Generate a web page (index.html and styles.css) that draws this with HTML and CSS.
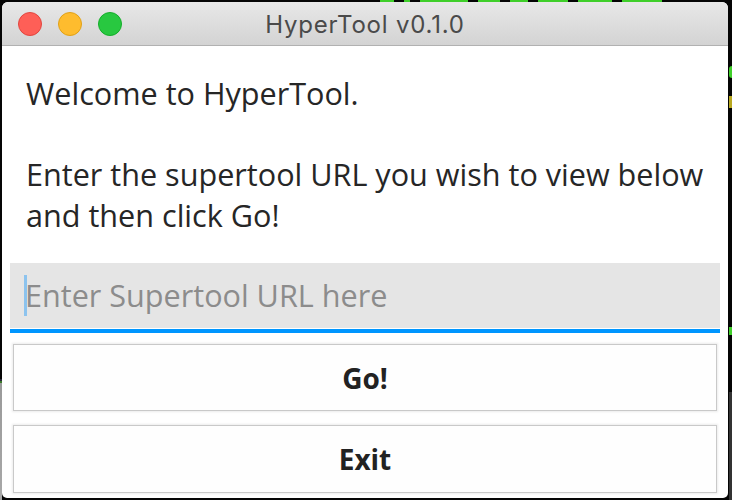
FILE: index.html
```html
<!DOCTYPE html>
<html>
<head>
<meta charset="utf-8">
<link rel="stylesheet" href="styles.css">
</head>
<body>
<div class="desktop">
  <div class="term term-top">
    <span class="tw" style="width:14px"></span><span class="tw" style="width:6px"></span><span class="tw" style="width:48px"></span><span class="tw" style="width:22px"></span><span class="tw" style="width:18px"></span><span class="tw" style="width:30px"></span><span class="tw" style="width:34px"></span><span class="tw" style="width:40px"></span>
  </div>
  <div class="term-side term-left"></div>
  <div class="term-side term-right"></div>
  <span class="mark m-e"></span>
  <span class="mark m-u"></span>
  <span class="mark m-dot"></span>

  <div class="window">
    <div class="titlebar">
      <div class="lights">
        <span class="light red"></span>
        <span class="light yellow"></span>
        <span class="light green"></span>
      </div>
      <div class="title">HyperTool v0.1.0</div>
    </div>
    <div class="content">
      <p class="intro">Welcome to HyperTool.<br><br>Enter the supertool URL you wish to view below<br>and then click Go!</p>
      <div class="field">
        <span class="caret"></span>
        <span class="placeholder">Enter Supertool URL here</span>
      </div>
      <button class="btn btn-go">Go!</button>
      <button class="btn btn-exit">Exit</button>
    </div>
  </div>
</div>
</body>
</html>
```
FILE: styles.css
```css
* { box-sizing: border-box; }
html, body { margin: 0; padding: 0; }
body {
  width: 732px;
  height: 500px;
  background: #000;
  overflow: hidden;
  font-family: "Open Sans", "Noto Sans", sans-serif;
}
.desktop {
  position: relative;
  width: 732px;
  height: 500px;
  background: #050505;
}
.term-top {
  position: absolute;
  left: 380px;
  top: 0;
  height: 3px;
  display: flex;
  gap: 10px;
}
.tw {
  display: block;
  height: 2px;
  background: #3fcf2a;
}
.term-side {
  position: absolute;
}
.term-left {
  left: 0;
  top: 379px;
  width: 2px;
  height: 121px;
  background: linear-gradient(#2a2a38 0, #2a2a38 2px, #3b7a2a 2px, #3b7a2a 4px, #9a9a9a 4px, #a8a8a8 100%);
}
.term-right {
  left: 729px;
  top: 392px;
  width: 3px;
  height: 108px;
  background: #333;
}
.mark {
  position: absolute;
  left: 729px;
  width: 3px;
  display: block;
}
.m-e { top: 66px; height: 12px; background: #3fcf2a; border-radius: 3px 0 0 3px; }
.m-u { top: 96px; height: 12px; background: #b8a820; }
.m-dot { top: 327px; height: 8px; background: #3fcf2a; }

.window {
  position: absolute;
  left: 2px;
  top: 2px;
  width: 726px;
  height: 496px;
  background: #fff;
  border-radius: 6px 6px 5px 5px;
  overflow: hidden;
  display: flex;
  flex-direction: column;
}
.titlebar {
  height: 44px;
  flex: none;
  background: linear-gradient(#e8e8e8, #d3d3d3);
  border-bottom: 1px solid #b1b1b1;
  display: flex;
  align-items: center;
  justify-content: center;
  position: relative;
}
.lights {
  position: absolute;
  left: 16px;
  top: 10px;
  display: flex;
  gap: 16px;
}
.light {
  width: 24px;
  height: 24px;
  border-radius: 50%;
  display: block;
}
.red { background: #fe5f57; border: 1px solid #e2463f; }
.yellow { background: #febc2e; border: 1px solid #e1a116; }
.green { background: #28c840; border: 1px solid #14ae2a; }
.title {
  font-family: Inter, "Liberation Sans", sans-serif;
  font-size: 24px;
  color: #4a4a4a;
  letter-spacing: 0.8px;
  margin-top: 1px;
}

.content {
  flex: 1;
  display: flex;
  flex-direction: column;
  padding: 27px 8px 0;
}
.intro {
  margin: 0;
  padding-left: 16px;
  font-size: 30.6px;
  line-height: 40.6px;
  color: #262626;
}
.field {
  position: relative;
  margin-top: 28px;
  height: 70px;
  background: #e5e5e5;
  border-bottom: 4px solid #0096ff;
  box-shadow: inset 0 -1px 0 #fff;
  padding: 12px 0 0 15px;
}
.caret {
  position: absolute;
  left: 14px;
  top: 12px;
  width: 3px;
  height: 41px;
  background: #8cc3ee;
}
.placeholder {
  font-size: 30.6px;
  line-height: 41px;
  color: #8c8c8c;
}
.btn {
  margin: 11px 3px 0;
  height: 67px;
  background: #fefefe;
  border: 1px solid #c9c9c9;
  box-shadow: 0 0 2px 1px rgba(0,0,0,0.08);
  font-family: "Open Sans", "Noto Sans", sans-serif;
  font-weight: 700;
  font-size: 28px;
  color: #222;
  padding: 0;
  border-radius: 0;
}
.btn-exit {
  margin-top: 14px;
  height: 68px;
}
```
